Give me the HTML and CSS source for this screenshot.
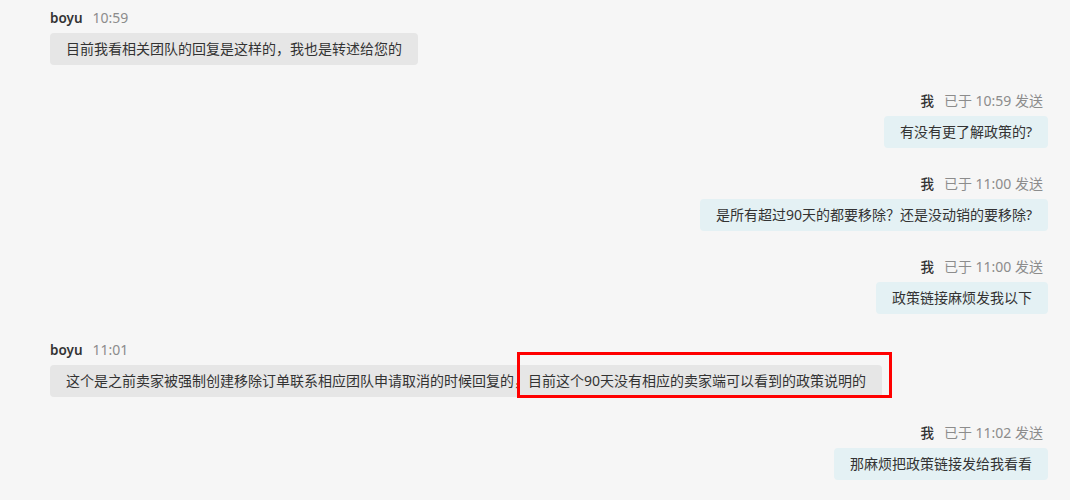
FILE: index.html
```html
<!DOCTYPE html>
<html lang="zh-CN">
<head>
    <meta charset="UTF-8">
    <title>会话</title>
    <link rel="stylesheet" href="styles.css">
</head>
<body>
    <div class="chat">
        <div class="msg">
            <div class="meta"><span class="name">boyu</span><span class="time">10:59</span></div>
            <div class="bubble">目前我看相关团队的回复是这样的，我也是转述给您的</div>
        </div>
        <div class="msg mine">
            <div class="meta"><span class="name">我</span><span class="time">已于 10:59 发送</span></div>
            <div class="bubble">有没有更了解政策的?</div>
        </div>
        <div class="msg mine">
            <div class="meta"><span class="name">我</span><span class="time">已于 11:00 发送</span></div>
            <div class="bubble">是所有超过90天的都要移除？还是没动销的要移除?</div>
        </div>
        <div class="msg mine">
            <div class="meta"><span class="name">我</span><span class="time">已于 11:00 发送</span></div>
            <div class="bubble">政策链接麻烦发我以下</div>
        </div>
        <div class="msg">
            <div class="meta"><span class="name">boyu</span><span class="time">11:01</span></div>
            <div class="bubble">这个是之前卖家被强制创建移除订单联系相应团队申请取消的时候回复的，目前这个90天没有相应的卖家端可以看到的政策说明的</div>
        </div>
        <div class="msg mine">
            <div class="meta"><span class="name">我</span><span class="time">已于 11:02 发送</span></div>
            <div class="bubble">那麻烦把政策链接发给我看看</div>
        </div>
        <div class="highlight"></div>
    </div>
</body>
</html>
```

FILE: styles.css
```css
body {
    margin: 0;
    background-color: #f6f6f6;
    font-family: "Noto Sans", "Noto Sans CJK SC", sans-serif;
    color: #333333;
}
.chat {
    position: relative;
    padding: 9px 22px 0 50px;
}
.msg {
    display: flex;
    flex-direction: column;
    align-items: flex-start;
    margin-bottom: 27px;
}
.msg.mine {
    align-items: flex-end;
}
.meta {
    font-size: 13.5px;
    line-height: 18px;
    margin-bottom: 6px;
}
.mine .meta {
    padding-right: 5px;
}
.name {
    font-weight: 600;
    color: #333333;
    margin-right: 10px;
}
.mine .name {
    font-weight: 500;
}
.time {
    color: #8c8c8c;
    font-size: 14px;
}
.bubble {
    font-size: 14px;
    line-height: 18px;
    padding: 7px 16px;
    border-radius: 4px;
    background-color: #e6e6e6;
}
.mine .bubble {
    background-color: #e4f1f4;
}
.highlight {
    position: absolute;
    left: 517px;
    top: 352px;
    width: 375px;
    height: 46px;
    box-sizing: border-box;
    border: 3px solid #ff0000;
}
```
